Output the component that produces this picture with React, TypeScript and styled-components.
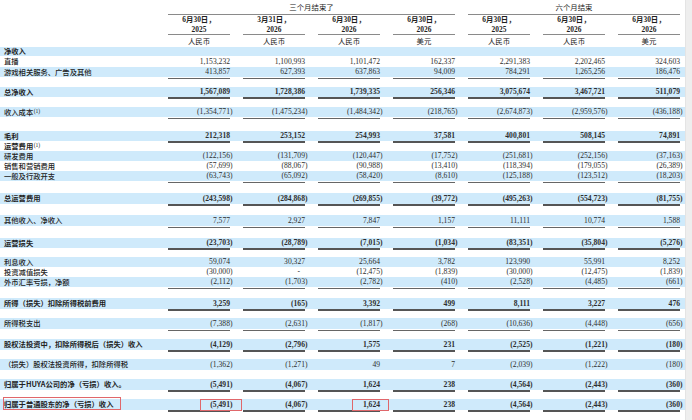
import * as React from 'react'
import styled, { createGlobalStyle, css } from 'styled-components'

type Rule = 'single' | 'double'

interface ILine {
    label?: string
    note?: string
    bold?: boolean
    band?: boolean
    h: number
    rule?: Rule
    values?: string[]
    boxed?: number[]
    gap?: boolean
}

const GlobalStyle = createGlobalStyle`
    html, body {
        margin: 0;
        padding: 0;
        background: #fff;
    }
    body {
        width: 692px;
        height: 420px;
        overflow: hidden;
    }
`

const COLS = '155px repeat(7, 75px)'
const BAND = '#cfeafb'
const RED = '#e0676b'

const Page = styled.div`
    display: flex;
    width: 692px;
    height: 420px;
    color: #222;
    font-family: 'Liberation Serif', 'Noto Sans CJK SC', serif;
`

const Sheet = styled.div`
    width: 685px;
    display: flex;
    flex-direction: column;
`

const Edge = styled.div`
    flex: 1;
    background: #eeeeee;
    border-left: 1px solid #e4e4e4;
`

const GroupRow = styled.div`
    display: grid;
    grid-template-columns: ${COLS};
    height: 15px;
`

const GroupTitle = styled.div<{ $span: number }>`
    grid-column: span ${(p) => p.$span};
    margin-left: 13px;
    border-bottom: 1px solid #8a8a8a;
    text-align: center;
    font-family: 'Noto Sans CJK SC', sans-serif;
    font-size: 7.4px;
    line-height: 14px;
`

const HeadRow = styled.div`
    display: grid;
    grid-template-columns: ${COLS};
    height: 32px;
`

const HeadCell = styled.div`
    margin-left: 13px;
    display: flex;
    flex-direction: column;
    text-align: center;
    font-size: 7.4px;
`

const DateLine = styled.div`
    font-weight: 700;
    line-height: 10px;
`

const YearLine = styled.div`
    font-weight: 700;
    line-height: 9px;
    border-bottom: 1px solid #8a8a8a;
`

const Currency = styled.div`
    line-height: 12px;
    font-family: 'Noto Sans CJK SC', sans-serif;
`

const Row = styled.div<{ $h: number; $band?: boolean }>`
    display: grid;
    grid-template-columns: ${COLS};
    height: ${(p) => p.$h}px;
    line-height: ${(p) => p.$h}px;
    background: ${(p) => (p.$band ? BAND : 'transparent')};
`

const Spacer = styled.div<{ $h: number }>`
    height: ${(p) => p.$h}px;
`

const Label = styled.div<{ $bold?: boolean }>`
    padding-left: 4px;
    font-family: 'Noto Sans CJK SC', sans-serif;
    font-size: 7.3px;
    font-weight: ${(p) => (p.$bold ? 700 : 500)};
    white-space: nowrap;
`

const LabelText = styled.span<{ $boxed?: boolean }>`
    position: relative;
    ${(p) =>
        p.$boxed &&
        css`
            &::after {
                content: '';
                position: absolute;
                left: -1.5px;
                right: -8px;
                top: -2px;
                bottom: -1px;
                border: 1px solid ${RED};
            }
        `}
`

const Note = styled.sup`
    font-family: 'Liberation Serif', serif;
    font-size: 5.6px;
    font-weight: 400;
    line-height: 0;
    vertical-align: 2.5px;
    margin-left: 0.5px;
`

const Cell = styled.div<{ $rule?: Rule }>`
    margin-left: 13px;
    margin-bottom: -2px;
    text-align: right;
    font-size: 7.6px;
    color: #2e2e2e;
    white-space: nowrap;
    border-bottom: ${(p) =>
        p.$rule === 'double'
            ? '2px solid #555'
            : p.$rule === 'single'
            ? '1px solid #666'
            : 'none'};
`

const Num = styled.span<{ $neg?: boolean; $bold?: boolean; $dash?: boolean; $boxed?: boolean }>`
    position: relative;
    font-weight: ${(p) => (p.$bold ? 700 : 400)};
    margin-right: ${(p) => (p.$neg ? '-2.5px' : '0')};
    padding-right: ${(p) => (p.$dash ? '5px' : '0')};
    ${(p) =>
        p.$boxed &&
        css`
            &::after {
                content: '';
                position: absolute;
                left: -10.5px;
                right: -9px;
                top: -1px;
                bottom: -2px;
                border: 1px solid ${RED};
            }
        `}
`

const columns = [
    { date: '6月30日，', year: '2025', cur: '人民币' },
    { date: '3月31日，', year: '2026', cur: '人民币' },
    { date: '6月30日，', year: '2026', cur: '人民币' },
    { date: '6月30日，', year: '2026', cur: '美元' },
    { date: '6月30日，', year: '2025', cur: '人民币' },
    { date: '6月30日，', year: '2026', cur: '人民币' },
    { date: '6月30日，', year: '2026', cur: '美元' }
]

const netLoss = ['(5,491)', '(4,067)', '1,624', '238', '(4,564)', '(2,443)', '(360)']

const lines: ILine[] = [
    { label: '净收入', bold: true, band: true, h: 9 },
    { label: '直播', h: 11, values: ['1,153,232', '1,100,993', '1,101,472', '162,337', '2,291,383', '2,202,465', '324,603'] },
    { label: '游戏相关服务、广告及其他', band: true, h: 10, rule: 'single', values: ['413,857', '627,393', '637,863', '94,009', '784,291', '1,265,256', '186,476'] },
    { gap: true, h: 10 },
    { label: '总净收入', bold: true, band: true, h: 10, rule: 'double', values: ['1,567,089', '1,728,386', '1,739,335', '256,346', '3,075,674', '3,467,721', '511,079'] },
    { gap: true, h: 10 },
    { label: '收入成本', note: '(1)', band: true, h: 10, rule: 'single', values: ['(1,354,771)', '(1,475,234)', '(1,484,342)', '(218,765)', '(2,674,873)', '(2,959,576)', '(436,188)'] },
    { gap: true, h: 14 },
    { label: '毛利', bold: true, band: true, h: 10, rule: 'double', values: ['212,318', '253,152', '254,993', '37,581', '400,801', '508,145', '74,891'] },
    { label: '运营费用', note: '(1)', bold: true, h: 10 },
    { label: '研发费用', band: true, h: 10, values: ['(122,156)', '(131,709)', '(120,447)', '(17,752)', '(251,681)', '(252,156)', '(37,163)'] },
    { label: '销售和营销费用', h: 10, values: ['(57,699)', '(88,067)', '(90,988)', '(13,410)', '(118,394)', '(179,055)', '(26,389)'] },
    { label: '一般及行政开支', band: true, h: 10, rule: 'single', values: ['(63,743)', '(65,092)', '(58,420)', '(8,610)', '(125,188)', '(123,512)', '(18,203)'] },
    { gap: true, h: 12 },
    { label: '总运营费用', bold: true, band: true, h: 11, rule: 'double', values: ['(243,598)', '(284,868)', '(269,855)', '(39,772)', '(495,263)', '(554,723)', '(81,755)'] },
    { gap: true, h: 11 },
    { label: '其他收入、净收入', band: true, h: 11, rule: 'single', values: ['7,577', '2,927', '7,847', '1,157', '11,111', '10,774', '1,588'] },
    { gap: true, h: 12 },
    { label: '运营损失', bold: true, band: true, h: 10, rule: 'double', values: ['(23,703)', '(28,789)', '(7,015)', '(1,034)', '(83,351)', '(35,804)', '(5,276)'] },
    { gap: true, h: 9 },
    { label: '利息收入', band: true, h: 10, values: ['59,074', '30,327', '25,664', '3,782', '123,990', '55,991', '8,252'] },
    { label: '投资减值损失', h: 10, values: ['(30,000)', '-', '(12,475)', '(1,839)', '(30,000)', '(12,475)', '(1,839)'] },
    { label: '外币汇率亏损，净额', band: true, h: 10, rule: 'single', values: ['(2,112)', '(1,703)', '(2,782)', '(410)', '(2,528)', '(4,485)', '(661)'] },
    { gap: true, h: 11 },
    { label: '所得（损失）扣除所得税前费用', bold: true, band: true, h: 11, rule: 'double', values: ['3,259', '(165)', '3,392', '499', '8,111', '3,227', '476'] },
    { gap: true, h: 9 },
    { label: '所得税支出', band: true, h: 11, rule: 'single', values: ['(7,388)', '(2,631)', '(1,817)', '(268)', '(10,636)', '(4,448)', '(656)'] },
    { gap: true, h: 10 },
    { label: '股权法投资中，扣除所得税后（损失）收入', bold: true, band: true, h: 11, rule: 'double', values: ['(4,129)', '(2,796)', '1,575', '231', '(2,525)', '(1,221)', '(180)'] },
    { gap: true, h: 9 },
    { label: '（损失）股权法投资所得，扣除所得税', band: true, h: 11, values: ['(1,362)', '(1,271)', '49', '7', '(2,039)', '(1,222)', '(180)'] },
    { gap: true, h: 9 },
    { label: '归属于HUYA公司的净（亏损）收入。', bold: true, band: true, h: 11, rule: 'double', values: netLoss },
    { gap: true, h: 9 },
    { label: '归属于普通股东的净（亏损）收入', bold: true, band: true, h: 11, rule: 'double', values: netLoss, boxed: [0, 2] }
]

const Line: React.FC<{ line: ILine }> = ({ line }) => (
    <Row $h={line.h} $band={line.band}>
        <Label $bold={line.bold}>
            <LabelText $boxed={!!line.boxed}>
                {line.label}
                {line.note && <Note>{line.note}</Note>}
            </LabelText>
        </Label>
        {(line.values || []).map((v, i) => (
            <Cell key={i} $rule={line.rule}>
                <Num
                    $bold={line.bold}
                    $neg={v.startsWith('(')}
                    $dash={v === '-'}
                    $boxed={line.boxed?.includes(i)}
                >
                    {v}
                </Num>
            </Cell>
        ))}
    </Row>
)

const App: React.FC = () => (
    <Page>
        <GlobalStyle />
        <Sheet>
            <GroupRow>
                <div />
                <GroupTitle $span={4}>三个月结束了</GroupTitle>
                <GroupTitle $span={3}>六个月结束</GroupTitle>
            </GroupRow>
            <HeadRow>
                <div />
                {columns.map((c, i) => (
                    <HeadCell key={i}>
                        <DateLine>{c.date}</DateLine>
                        <YearLine>{c.year}</YearLine>
                        <Currency>{c.cur}</Currency>
                    </HeadCell>
                ))}
            </HeadRow>
            {lines.map((line, i) =>
                line.gap ? <Spacer key={i} $h={line.h} /> : <Line key={i} line={line} />
            )}
        </Sheet>
        <Edge />
    </Page>
)

export default App
